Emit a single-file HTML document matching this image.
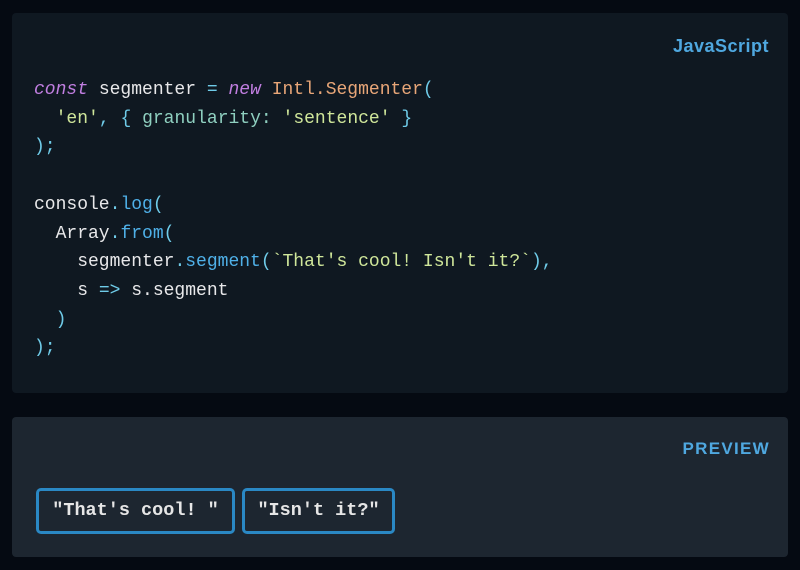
<!DOCTYPE html>
<html><head><style>
html,body{margin:0;padding:0;width:800px;height:570px;background:#050a12;overflow:hidden}
.code{position:absolute;left:12px;top:13px;width:776px;height:380px;background:#0f1821;border-radius:4px}
.lang{position:absolute;right:19px;top:23px;font:bold 18px "Liberation Sans",sans-serif;letter-spacing:0.5px;color:#4fa8e0}
pre{position:absolute;left:22px;top:63px;margin:0;font:18px/28.7px "Liberation Mono",monospace;color:#e8e8ea}
.k{color:#c07ee0;font-style:italic}.c{color:#e8a678}.s{color:#cfe69a}.p{color:#6fcbe8}.f{color:#4fb0e8}.t{color:#8fd0c0}
.prev{position:absolute;left:12px;top:417px;width:776px;height:140px;background:#1d2630;border-radius:4px}
.pl{position:absolute;right:18px;top:22px;font:bold 17px "Liberation Sans",sans-serif;letter-spacing:1.3px;color:#4fa8e0}
.b{position:absolute;top:71px;height:40px;border:3px solid #2a88c4;border-radius:5px;box-sizing:content-box;font:bold 18.5px/40px "Liberation Mono",monospace;color:#e6e6e6;text-align:center}
</style></head><body>
<div class="code"><div class="lang">JavaScript</div>
<pre><span class="k">const</span> segmenter <span class="p">=</span> <span class="k">new</span> <span class="c">Intl.Segmenter</span><span class="p">(</span>
  <span class="s">'en'</span><span class="p">,</span> <span class="p">{</span> <span class="t">granularity:</span> <span class="s">'sentence'</span> <span class="p">}</span>
<span class="p">);</span>

console<span class="p">.</span><span class="f">log</span><span class="p">(</span>
  Array<span class="p">.</span><span class="f">from</span><span class="p">(</span>
    segmenter<span class="p">.</span><span class="f">segment</span><span class="p">(</span><span class="s">`That's cool! Isn't it?`</span><span class="p">),</span>
    s <span class="p">=&gt;</span> s.segment
  <span class="p">)</span>
<span class="p">);</span></pre></div>
<div class="prev"><div class="pl">PREVIEW</div>
<div class="b" style="left:24px;width:193px">"That's cool! "</div>
<div class="b" style="left:230px;width:147px">"Isn't it?"</div>
</div>
</body></html>
